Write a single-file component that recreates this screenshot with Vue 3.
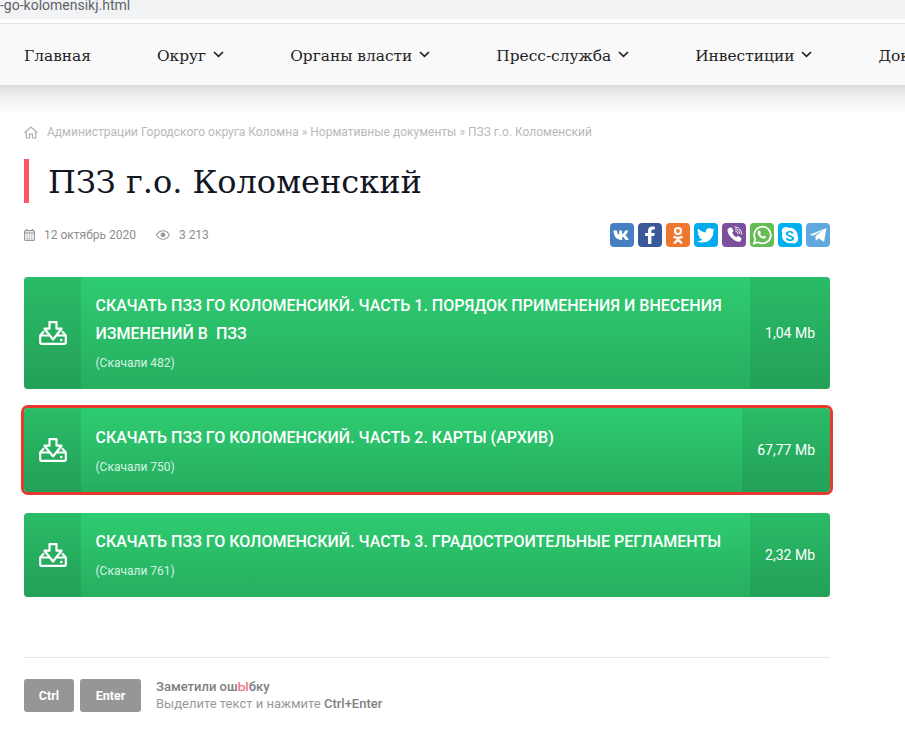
<script setup>
const nav = [
  { t: 'Главная' }, { t: 'Округ', c: 1 }, { t: 'Органы власти', c: 1 },
  { t: 'Пресс-служба', c: 1 }, { t: 'Инвестиции', c: 1 }, { t: 'Документы' }
]
const files = [
  { t: 'Скачать ПЗЗ го Коломенсикй. Часть 1. Порядок применения и внесения изменений в\u00a0 ПЗЗ', n: 482, s: '1,04 Mb' },
  { t: 'Скачать ПЗЗ го Коломенский. Часть 2. Карты (архив)', n: 750, s: '67,77 Mb', hl: true },
  { t: 'Скачать ПЗЗ го Коломенский. Часть 3. Градостроительные регламенты', n: 761, s: '2,32 Mb' }
]
</script>

<template>
  <div class="page">
    <div class="urlbar">-go-kolomensikj.html</div>
    <nav class="nav">
      <a v-for="n in nav" :key="n.t" class="nav-item">
        {{ n.t }}
        <svg v-if="n.c" class="chev" width="11" height="7" viewBox="0 0 11 7"><path d="M1 1l4.500 4.300L10 1" fill="none" stroke="#222" stroke-width="1.700"/></svg>
      </a>
    </nav>
    <main class="main">
      <div class="crumbs">
        <svg class="home" width="14" height="13" viewBox="0 0 14 13" fill="none" stroke="#b0b0b0" stroke-width="1.200"><path d="M.6 6.800L7 1l6.400 5.800M2.300 5.500V12h3.200V8.200h3V12h3.200V5.500"/></svg>
        <span>Администрации Городского округа Коломна » Нормативные документы » ПЗЗ г.о. Коломенский</span>
      </div>
      <h1 class="title">ПЗЗ г.о. Коломенский</h1>
      <div class="meta">
        <div class="meta-left">
          <svg width="11" height="12" viewBox="0 0 11 12"><path d="M2.500 0v2M8.500 0v2" stroke="#999" stroke-width="1.400"/><rect x=".6" y="1.600" width="9.800" height="9.800" rx="1" fill="none" stroke="#999" stroke-width="1.200"/><path d="M1 4h9" stroke="#999" stroke-width="1.200"/><path d="M2.500 6h6M2.500 8h6M2.500 9.700h6" stroke="#999" stroke-width="1" stroke-dasharray="1.400 .9"/></svg>
          <span class="date">12 октябрь 2020</span>
          <svg class="eye" width="14" height="10" viewBox="0 0 14 10"><path d="M.6 5C2.200 2.200 4.400.8 7 .8s4.800 1.400 6.400 4.200C11.800 7.800 9.600 9.200 7 9.200S2.200 7.800.6 5z" fill="none" stroke="#999" stroke-width="1.100"/><circle cx="7" cy="4.800" r="2.400" fill="#999"/></svg>
          <span>3 213</span>
        </div>
        <div class="social">
          <span class="s" style="background:#4680c2"><svg viewBox="0 0 24 24" width="24" height="24"><path fill="#fff" d="M3.500 7.500h3.300c.4 2.500 1.400 3.900 2.400 4.300V7.500h3v3.700c1.200-.4 2.300-1.800 2.900-3.700h3c-.5 2.300-1.800 4-2.900 4.900 1 .6 2.700 2 3.500 4.600h-3.300c-.7-1.900-2-3.100-3.200-3.300V17h-.9c-4.600 0-7.500-3.400-7.800-9.500z"/></svg></span>
          <span class="s" style="background:#3b5998"><svg viewBox="0 0 24 24" width="24" height="24"><path fill="#fff" d="M13.400 21v-8h2.900l.4-3.100h-3.300V8c0-.9.300-1.500 1.600-1.500h1.800V3.700c-.3 0-1.400-.1-2.600-.1-2.500 0-4.200 1.500-4.200 4.300v2H7.100V13H10v8z"/></svg></span>
          <span class="s" style="background:#ee762d"><svg viewBox="0 0 24 24" width="24" height="24" fill="none" stroke="#fff" stroke-width="2.200"><circle cx="12" cy="8" r="3"/><path d="M7.500 13.500c3 1.800 6 1.800 9 0M12 15v1.500M8 20.500l4-4 4 4"/></svg></span>
          <span class="s" style="background:#00aced"><svg viewBox="0 0 24 24" width="24" height="24"><path fill="#fff" d="M21 6.700c-.7.300-1.400.5-2.100.6.800-.5 1.300-1.200 1.600-2-.7.400-1.500.7-2.300.9a3.700 3.700 0 0 0-6.300 3.400C8.800 9.400 6 7.900 4.200 5.600c-1 1.700-.5 3.800 1.100 4.900-.6 0-1.200-.2-1.700-.5 0 1.800 1.300 3.300 3 3.700-.5.100-1.100.2-1.700.1.500 1.500 1.800 2.500 3.500 2.600A7.400 7.400 0 0 1 3 17.900c7.700 4.500 17-.9 16.300-9.900.7-.4 1.300-1 1.700-1.300z"/></svg></span>
          <span class="s" style="background:#7b519d"><svg viewBox="0 0 24 24" width="24" height="24"><path fill="#fff" d="M7.600 4.700l1.700-.4 2.300 3.700-1.500 1.500c.6 1.800 2.200 3.700 4.300 4.700l1.500-1.500 3.700 2.500-.6 2.200c-.7 1.300-2.200 1.800-3.700 1.200C9.700 16.200 6.500 12.300 5.500 8c-.3-1.600.7-2.800 2.100-3.300z"/><path fill="none" stroke="#fff" stroke-width="1" d="M12.500 3.800c3.900.3 6.900 3 7.300 7.600M13 6c2.500.2 4.300 2 4.600 4.900M13.500 8.200c1.300.2 2 1 2.200 2.500"/></svg></span>
          <span class="s" style="background:#65bc54"><svg viewBox="0 0 24 24" width="24" height="24"><path fill="none" stroke="#fff" stroke-width="1.800" d="M4 20.500l1.300-4.300a8.300 8.300 0 1 1 3 3z"/><path fill="#fff" d="M9.300 7.600c.4 0 .7.100.9.600l.7 1.600-.8 1.200c.7 1.300 1.700 2.200 3 2.800l1-1.100 1.800.9c.2.900-.7 2.100-2.100 2.200-2.900-.1-6.200-3.200-6.200-6.200 0-1.100.6-1.900 1.500-2z"/></svg></span>
          <span class="s" style="background:#00aff0"><svg viewBox="0 0 24 24" width="24" height="24"><path fill="#fff" fill-rule="evenodd" d="M8 4a4 4 0 0 1 2.400.8 8 8 0 0 1 9.200 8.800A4.500 4.500 0 0 1 14 20a8 8 0 0 1-9.800-9.800A4.200 4.200 0 0 1 8 4zm8 11.500c0-3.200-6-3-6-5 0-1.300 3-1.300 3.800.4l1.700-.9c-1.400-2.800-7.700-2.500-7.700.6 0 3.100 6 3.100 6 5 0 1.300-3.500 1.300-4.300-.8l-1.700 1c1.300 3.300 8.200 3.100 8.200-.3z"/></svg></span>
          <span class="s" style="background:#61a8de"><svg viewBox="0 0 24 24" width="24" height="24"><path fill="#fff" d="M3.500 11.800L20.500 5 18 19l-5.500-3.800-2.600 2.800-.6-4.700 8-6.600-10 6z"/></svg></span>
        </div>
      </div>
      <div class="files">
        <a v-for="f in files" :key="f.n" class="file" :class="{ hl: f.hl }">
          <div class="ico">
            <svg width="28" height="24" viewBox="0 0 28 24" fill="none" stroke="#fff" stroke-width="2.200" stroke-linejoin="round"><path d="M10.500 1.200h7v6.500h5L14 18.500 5.500 7.700h5z"/><path d="M5 10.200L1.200 14.500v7.300a1 1 0 0 0 1 1h23.600a1 1 0 0 0 1-1v-7.300L23 10.200"/><path d="M1.200 14.500H10M26.800 14.500H18"/><path d="M21 19h2.500"/></svg>
          </div>
          <div class="body">
            <div class="name">{{ f.t }}</div>
            <div class="count">(Скачали {{ f.n }})</div>
          </div>
          <div class="size">{{ f.s }}</div>
        </a>
      </div>
      <div class="foot">
        <span class="key k1">Ctrl</span>
        <span class="key k2">Enter</span>
        <div class="note">
          <b>Заметили ош<i>Ы</i>бку</b><br>
          Выделите текст и нажмите <b>Ctrl+Enter</b>
        </div>
      </div>
    </main>
  </div>
</template>

<style>
html, body { margin: 0; background: #fff; overflow: hidden; }
</style>
<style scoped>
.page { width: 905px; height: 746px; overflow: hidden; font-family: Roboto, sans-serif; background: #fff; }
.urlbar { height: 19px; background: #f1f3f4; color: #5f6368; font: 14px/11px Roboto, sans-serif; overflow: hidden; margin-bottom: 4px; }
.nav { position: relative; height: 62px; box-sizing: border-box; border-top: 1px solid #e4e4e4; background: #f9f9f9; display: flex; align-items: center; gap: 66px; padding: 2px 0 0 24px; white-space: nowrap; font: 15.400px "DejaVu Serif", serif; color: #222; }
.nav::after { content: ""; position: absolute; left: 0; right: 0; top: 100%; height: 30px; background: linear-gradient(#dcdcdc, #f3f3f3 45%, #fff); }
.nav-item { display: flex; align-items: center; flex: none; }
.chev { margin-left: 7px; margin-top: -3px; }
.main { position: relative; width: 806px; margin-left: 24px; }
.crumbs { margin-top: 40px; height: 14px; display: flex; align-items: center; gap: 9px; font-size: 12px; color: #b9b9b9; white-space: nowrap; }
.title { margin: 20px 0 0; height: 44px; border-left: 5px solid #ff5263; padding-left: 19px; font: 400 32px/47px "DejaVu Serif", serif; color: #121622; }
.meta { margin-top: 20px; height: 24px; display: flex; justify-content: space-between; align-items: center; font-size: 12px; color: #8d8d8d; }
.meta-left { display: flex; align-items: center; }
.date { margin-left: 9px; }
.eye { margin: 0 9px 0 20px; }
.social { display: flex; gap: 4px; }
.s { width: 24px; height: 24px; border-radius: 4px; display: block; }
.s svg { display: block; }
.files { margin-top: 30px; display: flex; flex-direction: column; gap: 19px; }
.files .file:last-child { margin-top: 2px; }
.file { display: flex; border-radius: 4px; color: #fff; background: linear-gradient(#2ecc71, #27ae60); }
.file.hl { box-shadow: 0 0 0 3px #e8392c; }
.file.hl .body { padding-top: 16px; padding-bottom: 18px; }
.ico { width: 57px; flex: none; background: rgba(0,0,0,.08); display: flex; align-items: center; justify-content: center; }
.body { flex: 1; padding: 15px 15px 19px 14.500px; }
.name { font-size: 16px; font-weight: 500; line-height: 28px; text-transform: uppercase; }
.count { font-size: 12px; line-height: 14px; margin-top: 8px; color: #d6f3e1; }
.size { flex: none; padding: 0 15px; background: rgba(0,0,0,.08); display: flex; align-items: center; font-size: 14px; white-space: nowrap; }
.foot { margin-top: 60px; border-top: 1px solid #e5e5e5; padding-top: 21px; display: flex; align-items: flex-start; }
.key { height: 33px; background: #969696; border-radius: 3px; color: #fff; font-size: 12.500px; font-weight: 700; line-height: 33px; text-align: center; }
.k1 { width: 50px; margin-right: 6px; }
.k2 { width: 61px; margin-right: 15px; }
.note { font-size: 13px; line-height: 17px; color: #999; margin-top: -1px; }
.note b { font-weight: 500; color: #808080; }
.note i { font-style: normal; color: #f0788a; }
</style>
